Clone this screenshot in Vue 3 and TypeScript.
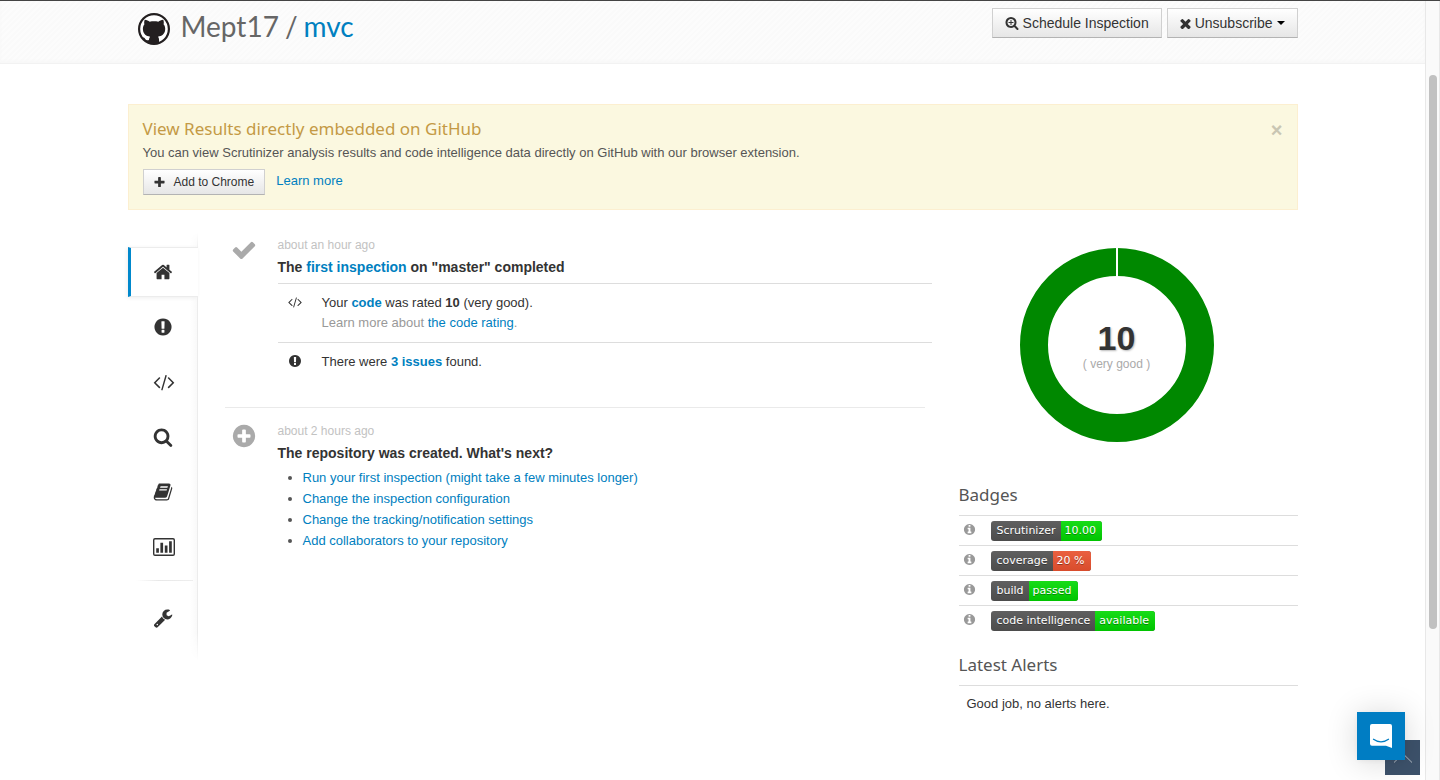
<script setup lang="ts">
import { h } from 'vue'

interface Icon { box: string; paths: string[] }

const disc = 'M1664 896q0 209-103 385.5t-279.5 279.5-385.5 103-385.5-103-279.5-279.5-103-385.5 103-385.5 279.5-279.5 385.5-103 385.5 103 279.5 279.5 103 385.5z'
const lens = 'M1216 832q0-185-131.5-316.5t-316.5-131.5-316.5 131.5-131.5 316.5 131.5 316.5 316.5 131.5 316.5-131.5 131.5-316.5zm512 832q0 52-38 90t-90 38q-54 0-90-38l-343-342q-179 124-399 124-143 0-273.5-55.5t-225-150-150-225-55.5-273.5 55.5-273.5 150-225 225-150 273.5-55.5 273.5 55.5 225 150 150 225 55.5 273.5q0 220-124 399l343 343q37 37 37 90z'
const full = '0 0 1792 1792'

const icons: Record<string, Icon> = {
  home: { box: full, paths: ['M1472 992v480q0 26-19 45t-45 19h-384v-384h-256v384h-384q-26 0-45-19t-19-45v-480q0-1 .5-3t.5-3l575-474 575 474q1 2 1 6zm223-69l-62 74q-8 9-21 11h-3q-13 0-21-7l-692-577-692 577q-12 8-24 7-13-2-21-11l-62-74q-8-10-7-23.5t11-21.5l719-599q32-26 76-26t76 26l244 204v-195q0-14 9-23t23-9h192q14 0 23 9t9 23v408l219 182q10 8 11 21.5t-7 23.5z'] },
  issue: { box: full, paths: ['M896 128q209 0 385.5 103t279.5 279.5 103 385.5-103 385.5-279.5 279.5-385.5 103-385.5-103-279.5-279.5-103-385.5 103-385.5 279.5-279.5 385.5-103zm128 1247v-190q0-14-9-23.5t-22-9.5h-192q-13 0-23 10t-10 23v190q0 13 10 23t23 10h192q13 0 22-9.5t9-23.5zm-2-344l18-621q0-12-10-18-10-8-24-8h-220q-14 0-24 8-10 6-10 18l17 621q0 10 10 17.5t24 7.5h185q14 0 23.5-7.5t10.5-17.5z'] },
  code: { box: '-64 0 1920 1792', paths: ['M553 1399l-50 50q-10 10-23 10t-23-10l-466-466q-10-10-10-23t10-23l466-466q10-10 23-10t23 10l50 50q10 10 10 23t-10 23l-393 393 393 393q10 10 10 23t-10 23zm591-1067l-373 1291q-4 13-15.5 19.5t-23.5 2.500l-62-17q-13-4-19.500-15.500t-2.500-24.500l373-1291q4-13 15.500-19.500t23.500-2.500l62 17q13 4 19.500 15.500t2.500 24.500zm657 651l-466 466q-10 10-23 10t-23-10l-50-50q-10-10-10-23t10-23l393-393-393-393q-10-10-10-23t10-23l50-50q10-10 23-10t23 10l466 466q10 10 10 23t-10 23z'] },
  search: { box: full, paths: [lens] },
  searchPlus: { box: full, paths: ['M1088 800v64q0 13-9.5 22.5t-22.5 9.5h-224v224q0 13-9.5 22.5t-22.5 9.5h-64q-13 0-22.500-9.500t-9.500-22.500v-224h-224q-13 0-22.500-9.500t-9.500-22.500v-64q0-13 9.500-22.500t22.500-9.500h224v-224q0-13 9.500-22.500t22.500-9.500h64q13 0 22.500 9.500t9.500 22.500v224h224q13 0 22.500 9.500t9.500 22.500z', lens] },
  book: { box: full, paths: ['M1703 478q40 57 18 129l-275 906q-19 64-76.5 107.5t-122.5 43.5h-923q-77 0-148.5-53.5t-99.5-131.5q-24-67-2-127 0-4 3-27t4-37q1-8-3-21.5t-3-19.5q2-11 8-21t16.5-23.5 16.5-23.5q23-38 45-91.5t30-91.5q3-10 .5-30t-.5-28q3-11 17-28t17-23q21-36 42-92t25-90q1-9-2.5-32t.5-28q4-13 22-30.5t22-22.5q19-26 42.5-84.5t27.5-96.5q1-8-3-25.5t-2-26.5q2-8 9-18t18-23 17-21q8-12 16.5-30.5t15-35 16-36 19.5-32 26.5-23.5 36-11.5 47.5 5.5l-1 3q38-9 51-9h761q74 0 114 56t18 130l-274 906q-36 119-71.5 153.5t-128.5 34.5h-869q-27 0-38 15-11 16-1 43 24 70 144 70h923q29 0 56-15.5t35-41.5l300-987q7-22 5-57 38 15 59 43zm-1064 2q-4 13 2 22.5t20 9.5h608q13 0 25.5-9.5t16.5-22.5l21-64q4-13-2-22.5t-20-9.5h-608q-13 0-25.5 9.5t-16.5 22.5zm-83 256q-4 13 2 22.5t20 9.5h608q13 0 25.5-9.5t16.5-22.5l21-64q4-13-2-22.5t-20-9.5h-608q-13 0-25.5 9.5t-16.5 22.5z'] },
  chart: { box: '0 0 22 18', paths: ['M2 0h18a2 2 0 0 1 2 2v14a2 2 0 0 1-2 2H2a2 2 0 0 1-2-2V2a2 2 0 0 1 2-2zm0 1.400a.6.6 0 0 0-.6.6v14a.6.6 0 0 0 .6.6h18a.6.6 0 0 0 .6-.6V2a.6.6 0 0 0-.6-.6z', 'M3.200 10.300h2.700v4.400H3.200zM7.400 4.700h2.700v10H7.400zM11.800 7.500h2.700v7.200h-2.700zM16.100 3.200h2.700v11.500h-2.700z'] },
  wrench: { box: full, paths: ['M448 1472q0-26-19-45t-45-19-45 19-19 45 19 45 45 19 45-19 19-45zm644-420l-682 682q-37 37-90 37-52 0-91-37l-106-108q-38-36-38-90 0-53 38-91l681-681q39 98 114.5 173.5t173.5 114.500zm634-435q0 39-23 106-47 134-164.500 217.500t-258.500 83.500q-185 0-316.500-131.500t-131.500-316.500 131.500-316.500 316.500-131.500q58 0 121.500 16.500t107.500 46.500q16 11 16 28t-16 28l-293 169v224l193 107q5-3 79-48.500t135.500-81 70.500-35.500q15 0 23.500 10t8.500 25z'] },
  check: { box: full, paths: ['M1671 566q0 40-28 68l-724 724-136 136q-28 28-68 28t-68-28l-136-136-362-362q-28-28-28-68t28-68l136-136q28-28 68-28t68 28l294 295 656-657q28-28 68-28t68 28l136 136q28 28 28 68z'] },
  times: { box: '256 256 1280 1280', paths: ['M1490 1322q0 40-28 68l-136 136q-28 28-68 28t-68-28l-294-294-294 294q-28 28-68 28t-68-28l-136-136q-28-28-28-68t28-68l294-294-294-294q-28-28-28-68t28-68l136-136q28-28 68-28t68 28l294 294 294-294q28-28 68-28t68 28l136 136q28 28 28 68t-28 68l-294 294 294 294q28 28 28 68z'] },
  plus: { box: '128 128 1536 1536', paths: ['M1600 736v192q0 40-28 68t-68 28h-416v416q0 40-28 68t-68 28h-192q-40 0-68-28t-28-68v-416h-416q-40 0-68-28t-28-68v-192q0-40 28-68t68-28h416v-416q0-40 28-68t68-28h192q40 0 68 28t28 68v416h416q40 0 68 28t28 68z'] },
  plusCircle: { box: full, paths: ['M1344 960v-128q0-26-19-45t-45-19h-256v-256q0-26-19-45t-45-19h-128q-26 0-45 19t-19 45v256h-256q-26 0-45 19t-19 45v128q0 26 19 45t45 19h256v256q0 26 19 45t45 19h128q26 0 45-19t19-45v-256h256q26 0 45-19t19-45z' + disc] },
  info: { box: full, paths: ['M1152 1376v-160q0-14-9-23t-23-9h-96v-512q0-14-9-23t-23-9h-320q-14 0-23 9t-9 23v160q0 14 9 23t23 9h96v320h-96q-14 0-23 9t-9 23v160q0 14 9 23t23 9h448q14 0 23-9t9-23zm-128-896v-160q0-14-9-23t-23-9h-192q-14 0-23 9t-9 23v160q0 14 9 23t23 9h192q14 0 23-9t9-23z' + disc] },
}

const Glyph = (props: { name: string }) =>
  h('svg', { viewBox: icons[props.name].box, 'aria-hidden': 'true' },
    icons[props.name].paths.map((d) => h('path', { d, fill: 'currentColor', 'fill-rule': 'evenodd' })))
Glyph.props = ['name']

const nav = [
  { icon: 'home', label: 'Overview' },
  { icon: 'issue', label: 'Issues' },
  { icon: 'code', label: 'Code' },
  { icon: 'search', label: 'Inspections' },
  { icon: 'book', label: 'Reports' },
  { icon: 'chart', label: 'Statistics' },
]

const nextSteps = [
  'Run your first inspection (might take a few minutes longer)',
  'Change the inspection configuration',
  'Change the tracking/notification settings',
  'Add collaborators to your repository',
]

const badges = [
  { label: 'Scrutinizer', value: '10.00', tone: 'good' },
  { label: 'coverage', value: '20 %', tone: 'bad' },
  { label: 'build', value: 'passed', tone: 'good' },
  { label: 'code intelligence', value: 'available', tone: 'good' },
]
</script>

<template>
  <div class="window">
    <div class="page">
      <header class="header">
        <div class="container header-row">
          <div class="brand">
            <svg class="logo" viewBox="0 0 32 32" aria-hidden="true">
              <circle cx="16" cy="16" r="14.900" fill="#fff" stroke="#231f20" stroke-width="2.200" />
              <path transform="translate(-1.600 -1.400) scale(1.100)" fill="#231f20" d="M7.600 7.400c1.800.1 3.300.9 4.500 1.800 2.500-.6 5.300-.6 7.800 0 1.200-.9 2.700-1.700 4.500-1.800.7 1.600.6 3.200.3 4.200 1.300 1.500 1.700 3.300 1.400 5.400-.5 3.600-2.900 5.300-6.500 5.800.7.7 1 1.600 1 2.700v3.400c-3 1-6.200 1-9.200 0v-1.300c-3.600.5-3.800-2-5-2.900-.6-.5-1-.7-1-.9.800-.5 1.900 0 2.600 1 .9 1.300 1.900 1.600 3.400 1.100.1-1.400.4-2.400 1.100-3.100-3.700-.5-6-2.200-6.500-5.800-.3-2.100.1-3.900 1.300-5.400-.3-1-.4-2.600.3-4.200z" />
            </svg>
            <h1 class="title"><span>Mept17</span><span>/</span><a href="#">mvc</a></h1>
          </div>
          <div class="actions">
            <button class="btn" type="button"><Glyph name="searchPlus" class="i14" />Schedule Inspection</button>
            <button class="btn" type="button"><Glyph name="times" class="i11" />Unsubscribe<span class="caret"></span></button>
          </div>
        </div>
      </header>

      <main class="container">
        <section class="notice">
          <div>
            <h2>View Results directly embedded on GitHub</h2>
            <p>You can view Scrutinizer analysis results and code intelligence data directly on GitHub with our browser extension.</p>
            <div class="notice-actions">
              <button class="btn small" type="button"><Glyph name="plus" class="i11" />Add to Chrome</button>
              <a href="#">Learn more</a>
            </div>
          </div>
          <button class="close" type="button" aria-label="Close">×</button>
        </section>

        <div class="columns">
          <nav class="side">
            <a v-for="(item, i) in nav" :key="item.icon" href="#" :class="['side-link', item.icon, { active: i === 0 }]" :aria-label="item.label">
              <Glyph :name="item.icon" />
            </a>
            <hr>
            <a href="#" class="side-link wrench" aria-label="Settings"><Glyph name="wrench" /></a>
          </nav>

          <div class="timeline">
            <article class="event">
              <Glyph name="check" class="event-icon" />
              <div class="event-body">
                <time>about an hour ago</time>
                <h3>The <a href="#">first inspection</a> on "master" completed</h3>
                <div class="details">
                  <div class="detail">
                    <Glyph name="code" class="i14" />
                    <div>
                      <p>Your <a href="#"><b>code</b></a> was rated <b>10</b> (very good).</p>
                      <p class="muted">Learn more about <a href="#">the code rating</a>.</p>
                    </div>
                  </div>
                  <div class="detail">
                    <Glyph name="issue" class="i14" />
                    <p>There were <a href="#"><b>3 issues</b></a> found.</p>
                  </div>
                </div>
              </div>
            </article>
            <hr class="separator">
            <article class="event">
              <Glyph name="plusCircle" class="event-icon" />
              <div class="event-body">
                <time>about 2 hours ago</time>
                <h3>The repository was created. What's next?</h3>
                <ul>
                  <li v-for="step in nextSteps" :key="step"><a href="#">{{ step }}</a></li>
                </ul>
              </div>
            </article>
          </div>

          <aside class="summary">
            <div class="score">
              <svg viewBox="0 0 194 194" aria-hidden="true">
                <circle cx="97" cy="97" r="83" fill="none" stroke="#008800" stroke-width="28" />
                <path d="M97 0v29" stroke="#fff" stroke-width="2" />
              </svg>
              <div class="score-text"><strong>10</strong><span>( very good )</span></div>
            </div>
            <h2>Badges</h2>
            <ul class="badges">
              <li v-for="badge in badges" :key="badge.label">
                <Glyph name="info" class="i13" />
                <span class="badge"><span>{{ badge.label }}</span><span :class="badge.tone">{{ badge.value }}</span></span>
              </li>
            </ul>
            <h2>Latest Alerts</h2>
            <p class="alerts">Good job, no alerts here.</p>
          </aside>
        </div>
      </main>
    </div>
    <div class="scroll-track"><div class="scroll-thumb"></div></div>

    <button class="to-top" type="button" aria-label="Back to top">
      <svg viewBox="0 0 20 10" aria-hidden="true"><path d="M1 9.500 10 .7l9 8.800" fill="none" stroke="#b5bdc6" /></svg>
    </button>
    <button class="chat" type="button" aria-label="Open chat">
      <svg viewBox="0 0 22 24" aria-hidden="true">
        <path d="M2 0h18a2 2 0 0 1 2 2v22l-6-2.300H2a2 2 0 0 1-2-2V2a2 2 0 0 1 2-2z" fill="#fff" />
        <path d="M3.500 15.300c4.500 3.400 10.500 3.400 15 0" fill="none" stroke="#007dc3" stroke-width="1.300" stroke-linecap="round" />
      </svg>
    </button>
  </div>
</template>

<style>
body { background: #fff; }
</style>

<style scoped>
* { box-sizing: border-box; }
.window {
  display: flex;
  height: 100vh;
  overflow: hidden;
  border-top: 1px solid #444;
  color: #333;
  font: 13px/20px "Liberation Sans", Arial, sans-serif;
}
.page { flex: 1; min-width: 0; }
.container { max-width: 1170px; margin: 0 auto; }
h1, h2, h3, p, ul { margin: 0; padding: 0; }
a { color: #0080c0; text-decoration: none; }
button { font-family: inherit; cursor: pointer; }
.i14 { width: 14px; height: 14px; flex: none; }
.i13 { width: 13px; height: 13px; flex: none; }
.i11 { width: 11px; height: 11px; flex: none; }

.header {
  height: 63px;
  border-bottom: 1px solid #f2f2f2;
  background: repeating-linear-gradient(135deg, #fafafa 0 2px, #fcfcfc 2px 4px);
  box-shadow: inset 0 -2px 3px #f7f7f7;
}
.header-row { display: flex; justify-content: space-between; align-items: flex-start; padding-top: 7px; }
.brand { display: flex; gap: 11px; padding-left: 10px; }
.logo { width: 32px; height: 32px; margin-top: 5px; }
.title { display: flex; gap: 6px; padding-top: 3px; color: #666; font: 400 28px/30px Lato, sans-serif; }
.actions { display: flex; gap: 5px; }
.btn {
  display: flex;
  align-items: center;
  gap: 4px;
  height: 30px;
  padding: 0 12px;
  border: 1px solid #d0d0d0;
  border-bottom-color: #b3b3b3;
  border-radius: 0;
  background: linear-gradient(#fff, #e6e6e6);
  color: #333;
  font-size: 14px;
  line-height: 20px;
}
.caret { border: 4px solid transparent; border-top-color: #000; border-bottom: 0; }
.btn.small { height: 26px; padding: 0 10px; gap: 9px; font-size: 12px; }

.notice {
  display: flex;
  justify-content: space-between;
  align-items: flex-start;
  margin-top: 40px;
  padding: 14px;
  border: 1px solid #fcefd0;
  background: #fbf8e0;
  color: #555;
}
.notice h2 { color: #c49a45; font: 400 17px/20px "Noto Sans", sans-serif; }
.notice p { margin: 4px 0 6px; }
.notice-actions { display: flex; gap: 11px; }
.notice-actions a { line-height: 24px; }
.close { margin: 1px 0 0; padding: 0; border: 0; background: none; color: #c9c6b3; font-size: 20px; font-weight: 700; line-height: 20px; }

.columns { display: flex; margin-top: 22px; }
.side {
  position: relative;
  flex: none;
  width: 70px;
  padding-top: 15px;
  padding-bottom: 16px;
  align-self: flex-start;
}
.side::after {
  content: "";
  position: absolute;
  z-index: -1;
  inset: 0 0 0 auto;
  width: 7px;
  border-right: 1px solid #ececec;
  background: linear-gradient(to right, #fff, #f9f9f9);
  mask-image: linear-gradient(transparent, #000 20px, #000 400px, transparent);
}
.side-link { display: flex; align-items: center; height: 55px; padding-left: 25px; color: #333; }
.side-link svg { width: 20px; height: 20px; }
.side-link.active {
  height: 50px;
  margin-bottom: 2px;
  padding-left: 22px;
  border: solid #ececec;
  border-width: 1px 0;
  border-left: 3px solid #0088cc;
  background: #fff;
  box-shadow: -1px 1px 4px #eee;
}
.side-link.code svg { width: 22px; }
.side-link.chart svg { width: 22px; height: 18px; }
.side hr { height: 1px; margin: 6px 5px 9px 8px; border: 0; background: linear-gradient(to right, #fff, #e8e8e8 40%, #eee); }

.timeline { flex: 1; min-width: 0; margin-left: 27px; padding-right: 27px; }
.event { display: flex; }
.event-icon { flex: none; width: 26px; height: 26px; margin: 5px 21px 0 6px; color: #aaa; }
.event-body { flex: 1; min-width: 0; }
time { display: block; padding-top: 3px; color: #c2c2c2; font-size: 12px; }
h3 { padding: 2px 0 4px; font-size: 14px; line-height: 20px; }
.details { padding-top: 2px; }
.detail { display: flex; gap: 20px; padding: 9px 0 9px 10px; border-top: 1px solid #ddd; }
.detail .i14 { margin-top: 2px; }
.muted { color: #999; }
.separator { height: 1px; margin: 26px 7px 10px 0; border: 0; background: #eaeaea; }
.event ul { padding-left: 25px; color: #555; line-height: 21px; }

.summary { flex: none; width: 339px; padding-top: 16px; }
.score { display: grid; place-items: center; width: 194px; margin: 0 0 43px 61px; }
.score > * { grid-area: 1 / 1; }
.score svg { width: 194px; height: 194px; }
.score-text { display: flex; flex-direction: column; align-items: center; padding-top: 1px; color: #aaa; font-size: 12px; line-height: 16px; }
.score-text strong { color: #333; font-size: 34px; line-height: 36px; text-shadow: 1px 1px 2px #bbb; }
.summary h2 { padding-bottom: 10px; border-bottom: 1px solid #ddd; color: #555; font: 400 17px/20px "Noto Sans", sans-serif; }
.badges { list-style: none; margin-bottom: 20px; }
.badges li { display: flex; align-items: center; gap: 15px; height: 30px; padding-left: 4px; border-top: 1px solid #ddd; color: #999; }
.badges li:first-child { height: 29px; border-top: 0; }
.badges .i13 { margin-bottom: 2px; }
.badge {
  display: flex;
  overflow: hidden;
  border-radius: 3px;
  background: linear-gradient(#606060, #4c4c4c);
  color: #fff;
  font: 11px/20px "DejaVu Sans", Verdana, sans-serif;
  text-shadow: 0 1px 0 rgb(0 0 0 / 35%);
}
.badge span { padding: 0 5px 0 6px; }
.badge .good, .badge .bad { padding: 0 6px 0 4px; }
.badge .good { background: linear-gradient(#18dc18, #00c400); }
.badge .bad { background: linear-gradient(#ea6040, #d84c2c); }
.alerts { padding: 8px; }

.scroll-track { flex: none; width: 15px; padding: 74px 3px 0; border: solid #e8e8e8; border-width: 0 1px; background: #fafafa; }
.scroll-thumb { width: 8px; height: 554px; border-radius: 4px; background: #c1c1c1; }
.to-top, .chat { position: fixed; display: grid; place-items: center; padding: 0; border: 0; }
.to-top { right: 20px; bottom: 5px; width: 35px; height: 35px; background: #3d526b; }
.to-top svg { width: 20px; height: 10px; }
.chat { right: 35px; bottom: 20px; width: 48px; height: 48px; background: #007dc3; box-shadow: 0 1px 6px rgb(0 0 0 / 6%), 0 2px 32px rgb(0 0 0 / 16%); }
.chat svg { width: 22px; height: 24px; }
</style>
